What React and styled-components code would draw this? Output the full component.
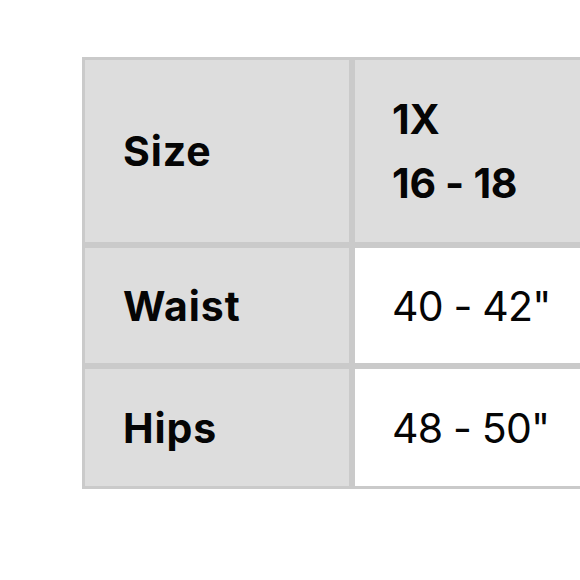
import styled, { createGlobalStyle } from "styled-components";

const GlobalStyle = createGlobalStyle`
  html, body {
    margin: 0;
    padding: 0;
    background: #ffffff;
    overflow: hidden;
  }
  body {
    font-family: Inter, "Liberation Sans", sans-serif;
    color: #050505;
  }
`;

const rows = [
  { label: "Size", values: ["1X", "16 - 18"], header: true },
  { label: "Waist", values: ['40 - 42"'] },
  { label: "Hips", values: ['48 - 50"'] },
];

export default function App() {
  return (
    <Page>
      <GlobalStyle />
      <SizeTable>
        {rows.map((row) => (
          <Row key={row.label} $header={row.header}>
            <LabelCell>{row.label}</LabelCell>
            <ValueCell $header={row.header}>
              {row.values.map((v) => (
                <Line key={v}>{v}</Line>
              ))}
            </ValueCell>
          </Row>
        ))}
      </SizeTable>
    </Page>
  );
}

const Page = styled.div`
  width: 580px;
  height: 580px;
  padding: 57px 0 0 82px;
  box-sizing: border-box;
  overflow: hidden;
`;

const SizeTable = styled.div`
  display: grid;
  grid-template-columns: 264px 320px;
  gap: 6px;
  padding: 3px;
  width: max-content;
  background: #cacaca;
`;

const Row = styled.div`
  display: contents;
  & > * {
    height: ${(p) => (p.$header ? "182px" : "115px")};
  }
  &:last-child > * {
    height: 117px;
  }
`;

const Cell = styled.div`
  display: flex;
  flex-direction: column;
  justify-content: center;
  padding: 0 37px;
  box-sizing: border-box;
  font-size: 41px;
  line-height: 64px;
`;

const LabelCell = styled(Cell)`
  background: #dddddd;
  font-weight: 700;
  padding-left: 38px;
  letter-spacing: 0.9px;
`;

const ValueCell = styled(Cell)`
  background: ${(p) => (p.$header ? "#dddddd" : "#ffffff")};
  font-weight: ${(p) => (p.$header ? 700 : 400)};
  letter-spacing: ${(p) => (p.$header ? "-0.3px" : "-0.8px")};
`;

const Line = styled.span`
  white-space: nowrap;
`;
